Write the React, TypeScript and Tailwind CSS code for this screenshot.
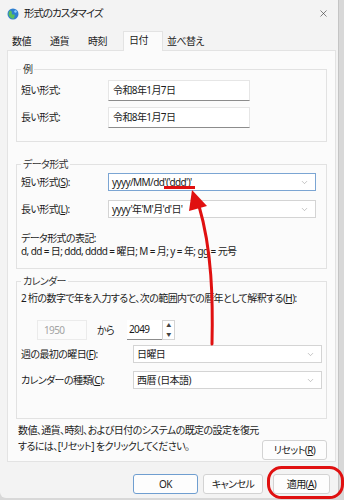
import { ChevronDown, X } from 'lucide-react'

const font = "font-['Noto_Sans','Noto_Sans_CJK_JP',sans-serif] [font-feature-settings:'palt'] tracking-[-0.6px]"

function TextBox({ value }: { value: string }) {
  return (
    <div className="flex h-[21px] w-[142px] items-center border border-[#e6e6e6] border-b-[#8c8c8c] bg-white pl-[4px] text-[10px] text-[#1b1b1b]">
      {value}
    </div>
  )
}

function Combo({
  value,
  width,
  focused = false,
}: {
  value: string
  width: string
  focused?: boolean
}) {
  return (
    <div
      className={`flex h-[18px] items-center justify-between border bg-white pl-[3px] pr-[6px] text-[10px] text-[#1b1b1b] ${width} ${
        focused ? 'border-[#7ba5d3]' : 'border-[#d4d4d4]'
      }`}
    >
      <span>{value}</span>
      <ChevronDown className="size-[9px] text-[#9a9a9a]" strokeWidth={1.5} />
    </div>
  )
}

function Group({
  title,
  className,
  children,
}: {
  title: string
  className: string
  children: React.ReactNode
}) {
  return (
    <fieldset className={`border border-[#e2e2e2] ${className}`}>
      <legend className="ml-[4px] h-[14px] px-[2px] text-[10px] leading-[14px] text-[#333]">
        {title}
      </legend>
      {children}
    </fieldset>
  )
}

function Button({
  children,
  className,
  primary = false,
}: {
  children: React.ReactNode
  className: string
  primary?: boolean
}) {
  return (
    <div
      className={`flex h-[20px] items-center justify-center rounded-[3px] border bg-[#fdfdfd] text-[10px] text-[#1b1b1b] ${className} ${
        primary ? 'border-[#6f9ed0]' : 'border-[#d3d3d3]'
      }`}
    >
      {children}
    </div>
  )
}

function Globe() {
  return (
    <svg width="12" height="12" viewBox="0 0 12 12">
      <circle cx="6" cy="6" r="5.5" fill="#2f7fd0" />
      <path d="M3 2.5c1.5.3 2.3 1.3 1.8 2.6-.4 1 .6 1.8 1.6 1.4.9-.4 1.6.3 1.3 1.4L7 10.6C4.6 10.9 2 9 1.6 6.4c-.2-1.6.4-3 1.4-3.9z" fill="#5bbf5a" />
      <circle cx="8.5" cy="3.5" r="1.2" fill="#8fd1ff" />
    </svg>
  )
}

export default function App() {
  return (
    <div className={`relative h-[500px] w-[344px] overflow-hidden bg-[#d8d8d8] ${font}`}>
      <div className="flex h-[498px] w-[339px] flex-col rounded-b-[6px] border-r border-[#c4c4c4] bg-[#f3f3f3]">
        {/* title bar */}
        <div className="flex h-[27px] items-center justify-between pl-[7px] pr-[9px]">
          <div className="flex items-center gap-[5px]">
            <Globe />
            <span className="text-[10.5px] tracking-[-1px] text-[#1b1b1b]">形式のカスタマイズ</span>
          </div>
          <X className="size-[11px] text-[#333]" strokeWidth={1.3} />
        </div>

        {/* tabs */}
        <div className="flex h-[23px] items-end pl-[7px] text-[10px] text-[#1b1b1b]">
          <div className="flex h-[18px] w-[38px] items-center pl-[5px]">数値</div>
          <div className="flex h-[18px] w-[38px] items-center pl-[5px]">通貨</div>
          <div className="flex h-[18px] w-[38px] items-center pl-[5px]">時刻</div>
          <div className="relative z-10 -mb-px ml-[2px] flex h-[20px] w-[40px] items-center border-x border-t border-[#e3e3e3] bg-[#fbfbfb] pb-[3px] pl-[5px]">
            日付
          </div>
          <div className="flex h-[18px] items-center pl-[4px]">並べ替え</div>
        </div>

        {/* panel */}
        <div className="ml-[7px] flex h-[412px] w-[329px] flex-col border border-[#e3e3e3] bg-[#fbfbfb] px-[8px] text-[10px] text-[#1b1b1b]">
          <Group title="例" className="mt-[11px] pt-[4px] pb-[13px]">
            <div className="flex flex-col gap-[6px]">
              <div className="flex items-center pl-[4px]">
                <span className="w-[87px]">短い形式:</span>
                <TextBox value="令和8年1月7日" />
              </div>
              <div className="flex items-center pl-[4px]">
                <span className="w-[87px]">長い形式:</span>
                <TextBox value="令和8年1月7日" />
              </div>
            </div>
          </Group>

          <Group title="データ形式" className="mt-[15px] pt-[2px] pb-[10px]">
            <div className="flex flex-col gap-[9px]">
              <div className="flex items-center pl-[4px]">
                <span className="w-[87px]">
                  短い形式(<span className="underline">S</span>):
                </span>
                <Combo value="yyyy/MM/dd'('ddd')'" width="w-[208px]" focused />
              </div>
              <div className="flex items-center pl-[4px]">
                <span className="w-[87px]">
                  長い形式(<span className="underline">L</span>):
                </span>
                <Combo value="yyyy'年'M'月'd'日'" width="w-[208px]" />
              </div>
            </div>
            <div className="mt-[14px] pl-[4px] leading-[13px]">
              <p>データ形式の表記:</p>
              <p>d, dd = 日; ddd, dddd = 曜日; M = 月; y = 年; gg = 元号</p>
            </div>
          </Group>

          <Group title="カレンダー" className="mt-[5px] pt-[3px] pb-[29px]">
            <p className="pl-[4px] leading-[14px]">
              2 桁の数字で年を入力すると、次の範囲内での暦年として解釈する(<span className="underline">H</span>):
            </p>
            <div className="mt-[15px] flex h-[20px] items-center pl-[20px]">
              <div className="flex h-[20px] w-[50px] items-center border border-[#ebebeb] pl-[6px] text-[#a3a3a3]">
                1950
              </div>
              <span className="ml-[10px] w-[30px]">から</span>
              <div className="flex h-[20px] w-[35px] items-center border-b border-[#8c8c8c] bg-white pl-[2px]">
                2049
              </div>
              <div className="flex h-[20px] w-[13px] flex-col border border-[#d4d4d4] bg-white text-[5px] leading-[9px] text-[#444]">
                <span className="text-center">▲</span>
                <span className="text-center">▼</span>
              </div>
            </div>
            <div className="mt-[5px] flex flex-col gap-[8px]">
              <div className="flex items-center pl-[4px]">
                <span className="w-[112px]">
                  週の最初の曜日(<span className="underline">F</span>):
                </span>
                <Combo value="日曜日" width="w-[189px]" />
              </div>
              <div className="flex items-center pl-[4px]">
                <span className="w-[112px]">
                  カレンダーの種類(<span className="underline">C</span>):
                </span>
                <Combo value="西暦 (日本語)" width="w-[189px]" />
              </div>
            </div>
          </Group>

          <div className="mt-[3px] flex justify-between pl-[2px]">
            <p className="leading-[16px]">
              数値、通貨、時刻、および日付のシステムの既定の設定を復元
              <br />
              するには、[リセット] をクリックしてください。
            </p>
          </div>
          <div className="-mt-[14px] flex justify-end">
            <Button className="w-[65px]">
              リセット(<span className="underline">R</span>)
            </Button>
          </div>
        </div>

        {/* footer */}
        <div className="mt-[12px] flex">
          <Button primary className="ml-[133px] w-[65px]">
            OK
          </Button>
          <Button className="ml-[5px] w-[60px]">キャンセル</Button>
          <Button className="ml-[10px] w-[57px]">
            適用(<span className="underline">A</span>)
          </Button>
        </div>
      </div>

      {/* red annotations */}
      <svg className="pointer-events-none absolute inset-0" width="344" height="500" viewBox="0 0 344 500">
        <line x1="164" y1="187.5" x2="195" y2="187.5" stroke="#e01010" strokeWidth="3" />
        <path d="M212 344 C213 300 212 250 199 206" fill="none" stroke="#e01010" strokeWidth="3" strokeLinecap="round" />
        <polygon points="192,190 189,211 207,206" fill="#e01010" />
        <rect x="268.5" y="467.5" width="74" height="30" rx="13" fill="none" stroke="#e01010" strokeWidth="3" />
      </svg>
    </div>
  )
}
